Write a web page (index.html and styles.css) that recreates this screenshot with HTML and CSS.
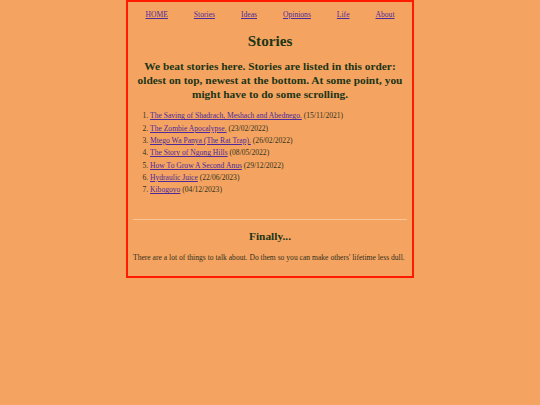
FILE: index.html
```html
<!DOCTYPE html>
<html>
<head>
<meta charset="utf-8">
<title>Stories</title>
<link rel="stylesheet" href="styles.css">
</head>
<body>
<div class="page">
  <nav class="nav">
    <a href="#">HOME</a>
    <a href="#">Stories</a>
    <a href="#">Ideas</a>
    <a href="#">Opinions</a>
    <a href="#">Life</a>
    <a href="#">About</a>
  </nav>
  <h1 class="title">Stories</h1>
  <h2 class="intro">We beat stories here. Stories are listed in this order: oldest on top, newest at the bottom. At some point, you might have to do some scrolling.</h2>
  <ol class="stories">
    <li><a href="#">The Saving of Shadrach, Meshach and Abednego.</a> (15/11/2021)</li>
    <li><a href="#">The Zombie Apocalypse.</a> (23/02/2022)</li>
    <li><a href="#">Mtego Wa Panya (The Rat Trap).</a> (26/02/2022)</li>
    <li><a href="#">The Story of Ngong Hills</a> (08/05/2022)</li>
    <li><a href="#">How To Grow A Second Anus</a> (29/12/2022)</li>
    <li><a href="#">Hydraulic Juice</a> (22/06/2023)</li>
    <li><a href="#">Kibogoyo</a> (04/12/2023)</li>
  </ol>
  <hr class="divider">
  <h2 class="finally">Finally...</h2>
  <p class="closing">There are a lot of things to talk about. Do them so you can make others' lifetime less dull.</p>
</div>
</body>
</html>
```

FILE: styles.css
```css
html, body {
  margin: 0;
  padding: 0;
}
body {
  background: #f4a460;
  font-family: "Liberation Serif", "Times New Roman", serif;
  font-size: 7.6px;
  color: #33301f;
}
.page {
  width: 274px;
  margin: 0 auto;
  border: 2px solid #ff1a00;
  padding: 0 5px 14px;
}
a {
  color: #4e2a9a;
}
.nav {
  display: flex;
  justify-content: center;
  gap: 26px;
  padding-top: 8px;
  line-height: 9px;
}
.title {
  margin: 13px 0 0;
  text-align: center;
  font-size: 15.2px;
  line-height: 18px;
  color: #1c3518;
}
.intro {
  margin: 10px 0 0;
  text-align: center;
  font-size: 11.4px;
  line-height: 13.8px;
  color: #1c3518;
}
.stories {
  margin: 9px 0 0;
  padding-left: 17px;
  line-height: 12.3px;
}
.divider {
  margin: 23px 0 0;
  border: 0;
  border-top: 1px solid #f8c49a;
  height: 0;
}
.finally {
  margin: 10px 0 0;
  text-align: center;
  font-size: 11.4px;
  line-height: 13px;
  color: #1c3518;
}
.closing {
  margin: 10px 0 0;
  line-height: 9px;
}
```
